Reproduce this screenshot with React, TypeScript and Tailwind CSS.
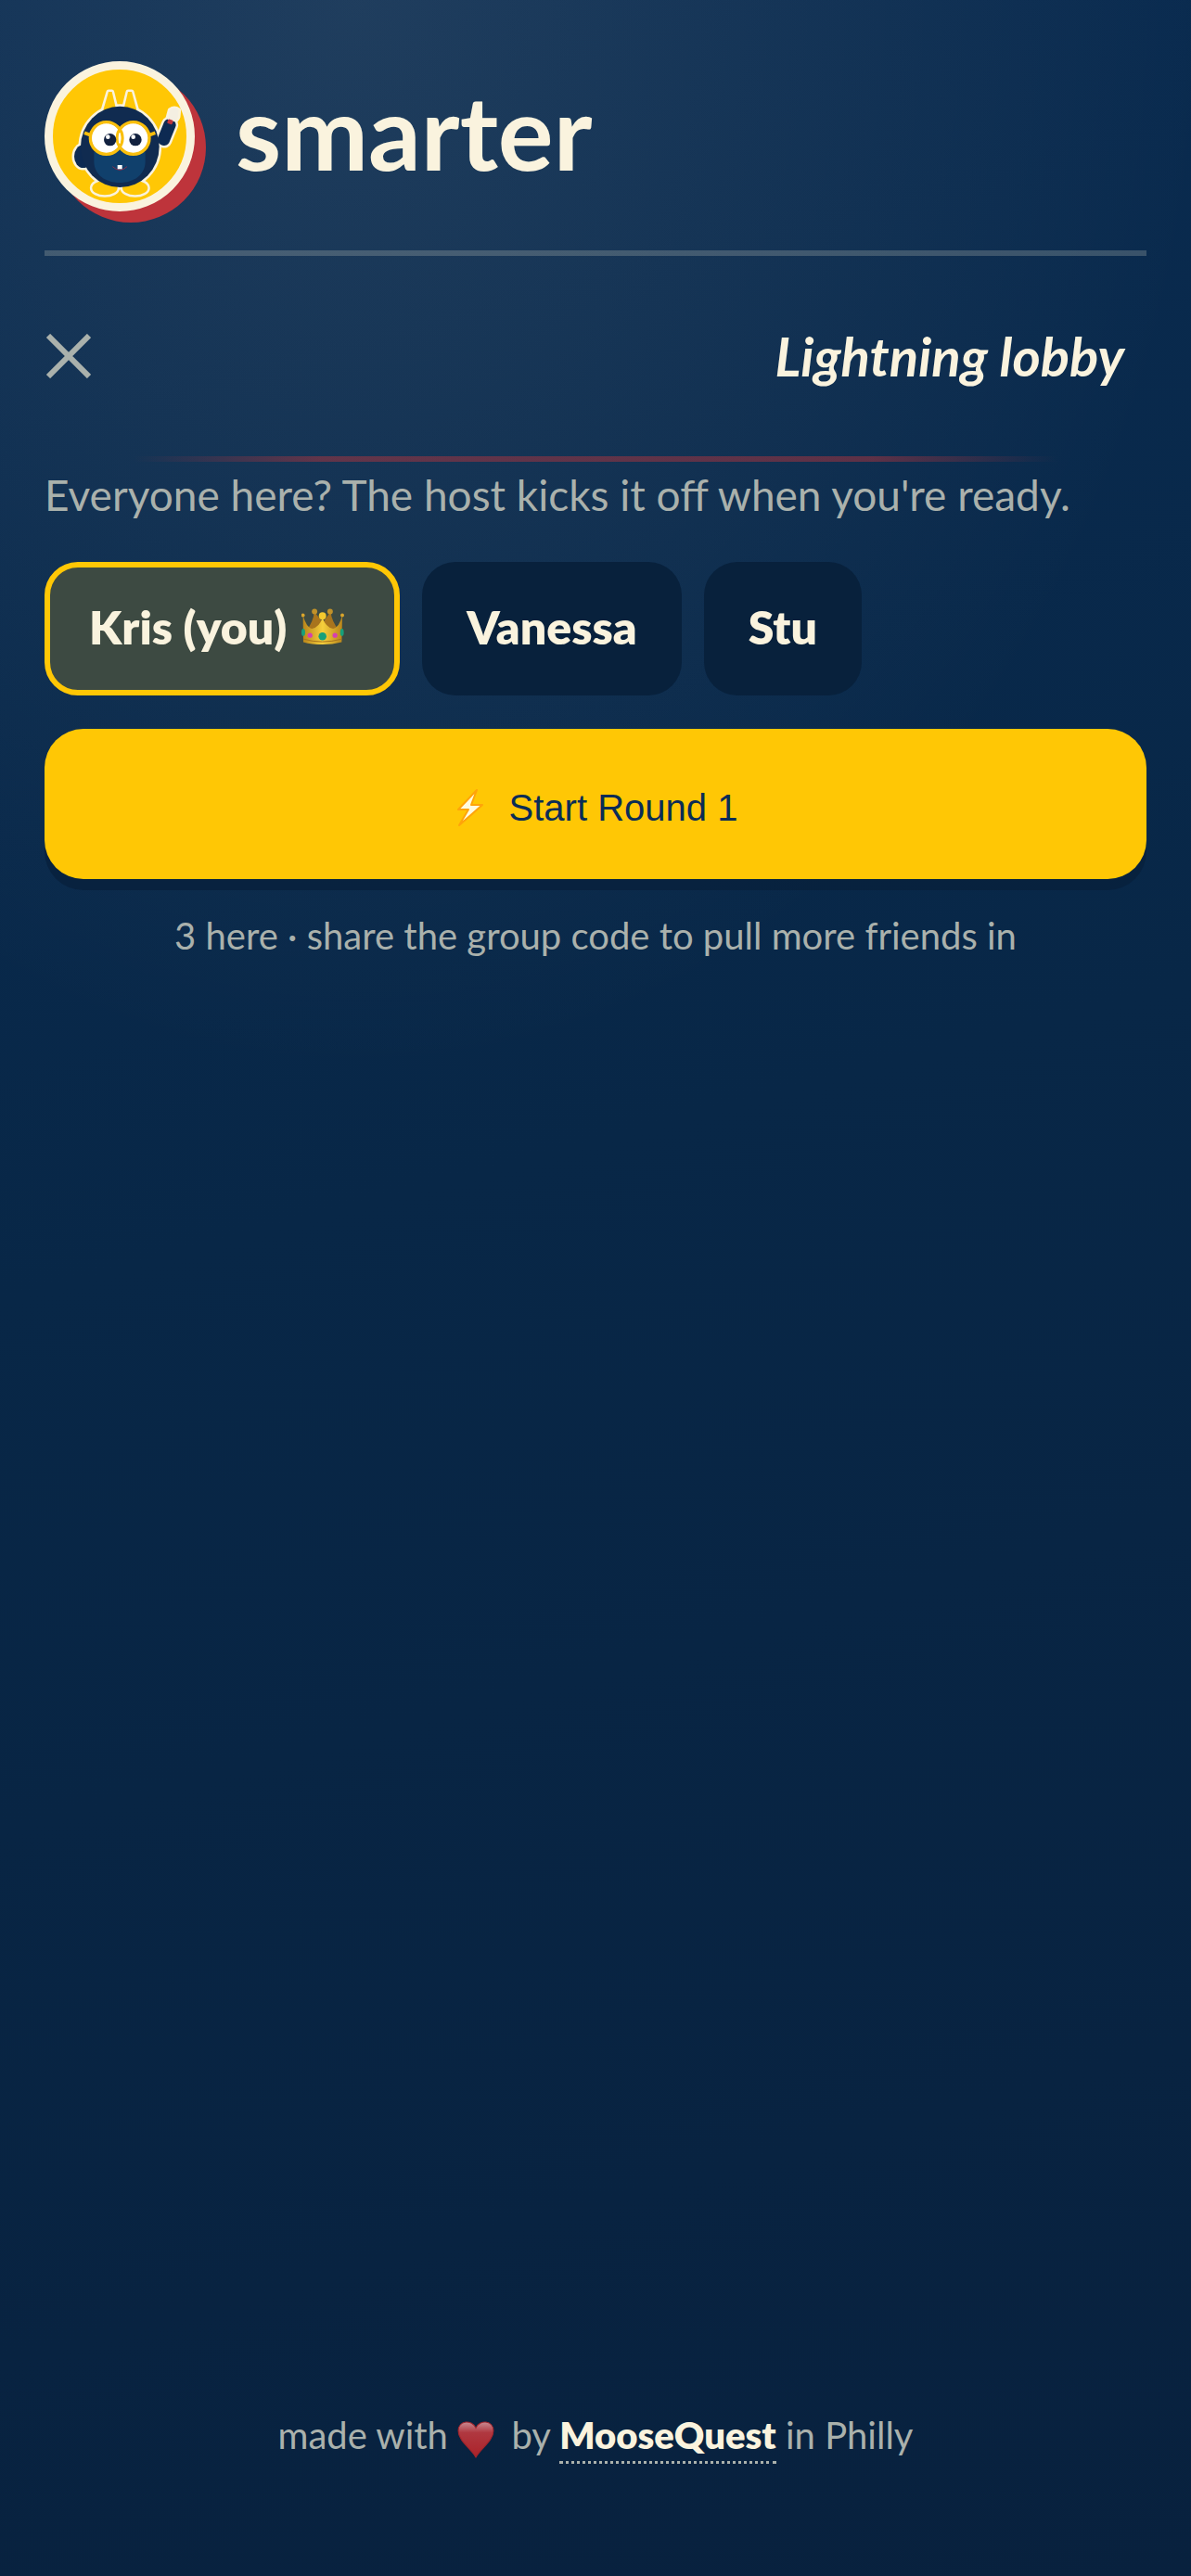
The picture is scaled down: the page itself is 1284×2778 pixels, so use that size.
import React from "react";

const players = [
  { name: "Kris (you)", host: true },
  { name: "Vanessa", host: false },
  { name: "Stu", host: false },
];

function Mascot() {
  return (
    <svg viewBox="51 75 432 432" className="h-full w-full" aria-hidden="true">
      <g fill="#ffc705" stroke="#faf3de" strokeWidth="15" strokeLinejoin="round">
        <path d="M214 204 L231 147 H242 L254 196 Z" />
        <path d="M322 204 L306 147 H294 L282 196 Z" />
        <ellipse cx="219" cy="458" rx="41" ry="23" />
        <ellipse cx="317" cy="458" rx="41" ry="23" />
        <ellipse cx="149" cy="356" rx="29" ry="37" />
        <rect x="399" y="234" width="40" height="88" rx="17" transform="rotate(22 419 278)" />
        <path d="M422 236 L430 206 Q444 196 458 206 L456 228 Q452 240 440 244 Z" />
        <ellipse cx="268" cy="325" rx="127" ry="131" />
      </g>
      <g fill="#ffc705">
        <path d="M214 206 L231 147 H242 L256 206 Z" />
        <path d="M322 206 L306 147 H294 L280 206 Z" />
        <ellipse cx="219" cy="458" rx="41" ry="23" />
        <ellipse cx="317" cy="458" rx="41" ry="23" />
      </g>
      <ellipse cx="149" cy="356" rx="29" ry="37" fill="#0d2a52" />
      <rect x="399" y="234" width="40" height="88" rx="17" fill="#0d2a52" transform="rotate(22 419 278)" />
      <path d="M422 236 L430 206 Q444 196 458 206 L456 228 Q452 240 440 244 Z" fill="#f4efe2" />
      <rect x="422" y="237" width="17" height="14" rx="3" fill="#be343b" transform="rotate(20 430 244)" />
      <ellipse cx="268" cy="325" rx="127" ry="131" fill="#102b50" />
      <path d="M184 342 Q267 330 350 342 V372 C350 416 312 441 267 441 C222 441 184 416 184 372 Z" fill="#10406c" />
      <path d="M153 280 L177 289 M382 280 L358 289" stroke="#fabf0c" strokeWidth="11" fill="none" />
      <circle cx="224" cy="297" r="49" fill="#fff" />
      <circle cx="311" cy="297" r="49" fill="#fff" />
      <circle cx="224" cy="297" r="52" fill="none" stroke="#fabf0c" strokeWidth="10" />
      <circle cx="311" cy="297" r="52" fill="none" stroke="#fabf0c" strokeWidth="10" />
      <ellipse cx="267" cy="297" rx="4" ry="18" fill="#fff" />
      <circle cx="236" cy="302" r="20" fill="#12213f" />
      <circle cx="318" cy="302" r="20" fill="#12213f" />
      <circle cx="229" cy="293" r="7" fill="#fff" />
      <circle cx="311" cy="293" r="7" fill="#fff" />
      <path d="M244 389 Q267 411 291 389" fill="none" stroke="#8a2d4a" strokeWidth="3" />
      <rect x="260" y="384" width="15" height="13" fill="#fff" />
    </svg>
  );
}

function Crown() {
  return (
    <svg viewBox="0 0 140 120" className="h-10 w-[46px]" role="img" aria-label="host">
      <defs>
        <linearGradient id="gold" x1="0" x2="1">
          <stop offset="0" stopColor="#b9851a" />
          <stop offset="0.5" stopColor="#f6cf3c" />
          <stop offset="1" stopColor="#b9851a" />
        </linearGradient>
      </defs>
      <path d="M16 74 Q40 40 42 10 L70 46 L96 10 Q98 40 124 74 Z" fill="#a8741d" />
      <circle cx="43" cy="10" r="9" fill="#c0912a" />
      <circle cx="94" cy="10" r="9" fill="#c0912a" />
      <path d="M5 22 Q16 62 34 66 Q58 62 69 30 Q80 62 104 66 Q124 62 134 22 L132 110 Q102 118 69 118 Q34 118 6 110 Z" fill="url(#gold)" />
      <path d="M6 100 Q68 118 132 100" fill="none" stroke="#a8741d" strokeWidth="3" />
      <circle cx="69" cy="24" r="12" fill="#f4c92e" />
      <circle cx="5" cy="22" r="6" fill="#d9a52c" />
      <circle cx="134" cy="22" r="6" fill="#d9a52c" />
      <circle cx="69" cy="91" r="13" fill="#17a07a" />
      <circle cx="28" cy="88" r="8" fill="#d63fb0" />
      <circle cx="110" cy="88" r="8" fill="#d63fb0" />
      <ellipse cx="6" cy="78" rx="6" ry="12" fill="#17a07a" />
      <ellipse cx="133" cy="78" rx="6" ry="12" fill="#17a07a" />
    </svg>
  );
}

function Bolt() {
  return (
    <svg viewBox="0 0 28 40" className="h-10 w-7" aria-hidden="true">
      <path d="M21 1 L1 22 L12 22 L2 39 L27 17 L15 17 Z" fill="#fffbe0" stroke="#ffa40a" strokeWidth="2" strokeLinejoin="round" />
    </svg>
  );
}

function Heart() {
  return (
    <svg viewBox="0 0 38 38" className="mr-2 inline-block size-10" role="img" aria-label="love">
      <defs>
        <linearGradient id="heart" x1="0" y1="0" x2="0" y2="1">
          <stop offset="0" stopColor="#c98a92" />
          <stop offset="0.3" stopColor="#b03840" />
          <stop offset="1" stopColor="#ab2229" />
        </linearGradient>
      </defs>
      <path d="M19 37 C14 28 1 20 1 10 C1 -1 15 -2 19 7 C23 -2 37 -1 37 10 C37 20 24 28 19 37 Z" fill="url(#heart)" stroke="#a3242b" strokeWidth="1" />
    </svg>
  );
}

export default function App() {
  return (
    <div className="flex min-h-screen flex-col bg-[radial-gradient(ellipse_72%_42%_at_30%_0%,rgba(250,243,222,0.09),transparent),linear-gradient(165deg,#0a2c52_0%,#082747_45%,#08213e_100%)] px-12 pt-[66px] pb-[122px] font-['Lato',sans-serif] text-[#faf3de]">
      <header className="flex items-center gap-11 border-b-6 border-[#faf3de]/20 pb-[42px]">
        <div className="size-[162px] shrink-0 rounded-full border-9 border-[#faf3de] bg-[#ffc705] shadow-[12px_12px_0_#be343b]">
          <Mascot />
        </div>
        <span className="pb-3 text-[112px] leading-[120px] font-bold">smarter</span>
      </header>

      <main>
        <div className="flex h-[216px] items-center justify-between pr-6">
          <button type="button" aria-label="Leave lobby" className="text-[#aab1ac]">
            <svg viewBox="0 0 50 48" className="h-12 w-[50px]" aria-hidden="true">
              <path d="M4 2 L48 46 M48 2 L4 46" stroke="currentColor" strokeWidth="6" fill="none" />
            </svg>
          </button>
          <h1 className="text-[58px] leading-[64px] font-bold italic">Lightning lobby</h1>
        </div>
        <div className="mx-24 h-1.5 bg-[linear-gradient(90deg,transparent,#be343b_20%,#be343b_80%,transparent)] opacity-45" />
        <p className="mt-2 text-[46px] leading-[56px] text-[#aab1ac]">
          Everyone here? The host kicks it off when you're ready.
        </p>

        <ul className="mt-11 flex flex-wrap gap-6 text-[50px] leading-[60px] font-extrabold">
          {players.map((p) => (
            <li
              key={p.name}
              className={
                p.host
                  ? "flex h-36 items-center gap-4 rounded-[36px] border-6 border-[#ffc705] bg-[#3d4a42] pr-[54px] pb-1 pl-[42px]"
                  : "flex h-36 items-center rounded-[36px] bg-[#08213c] px-12 pb-1"
              }
            >
              {p.name}
              {p.host && <Crown />}
            </li>
          ))}
        </ul>

        <button
          type="button"
          className="mt-9 flex h-[162px] w-full items-center justify-center gap-7 rounded-[42px] bg-[#ffc705] pt-2 pl-1 font-['Liberation_Sans',Arial,sans-serif] text-[40px] text-[#0a2c56] shadow-[0_12px_0_rgba(8,33,60,0.8)]"
        >
          <Bolt />
          Start Round 1
        </button>
        <p className="mt-9 text-center text-[40px] leading-[50px] text-[#aab1ac]">
          3 here · share the group code to pull more friends in
        </p>
      </main>

      <footer className="mt-auto text-center text-[40px] leading-[60px] text-[#aab1ac]">
        made with <Heart /> by{" "}
        <a href="#moosequest" className="border-b-3 border-dotted border-[#aab1ac] pb-1 font-extrabold text-[#faf3de]">
          MooseQuest
        </a>{" "}
        in Philly
      </footer>
    </div>
  );
}
